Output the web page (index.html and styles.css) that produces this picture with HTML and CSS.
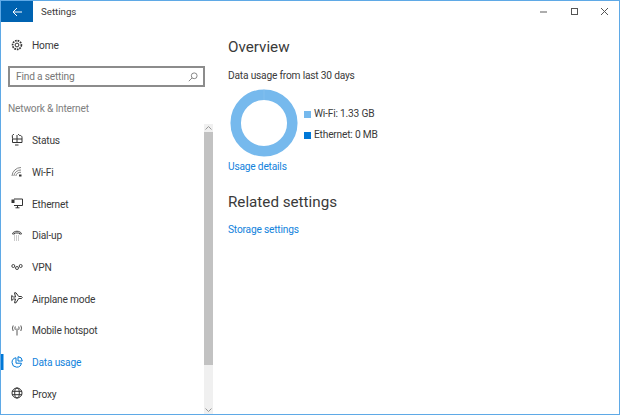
FILE: index.html
```html
<!DOCTYPE html>
<html lang="en">
<head>
    <meta charset="UTF-8">
    <title>Settings</title>
    <link rel="stylesheet" href="styles.css">
</head>
<body>
    <div class="window">
        <header class="titlebar">
            <div class="back-button">
                <svg width="10" height="10" viewBox="0 0 10 10" fill="none" stroke="#fff" stroke-width="1"><path d="M5 1 1 5l4 4M1 5h9"/></svg>
            </div>
            <div class="title">Settings</div>
            <div class="window-controls">
                <svg width="9" height="9" viewBox="0 0 9 9" stroke="#777" stroke-width="1.2" fill="none"><path d="M1 5h7"/></svg>
                <svg width="9" height="9" viewBox="0 0 9 9" stroke="#555" stroke-width="1" fill="none"><rect x="1.5" y="1.5" width="6" height="6"/></svg>
                <svg width="9" height="9" viewBox="0 0 9 9" stroke="#555" stroke-width="1" fill="none"><path d="M1 1l7 7M8 1 1 8"/></svg>
            </div>
        </header>
        <div class="main">
            <aside class="sidebar">
                <div class="home-row">
                    <svg class="icon" viewBox="0 0 12 12" fill="none" stroke="#333" stroke-width="1"><circle cx="6" cy="6" r="1.9"/><circle cx="6" cy="6" r="4.4" stroke-dasharray="1.7 0.9" stroke-width="1.7"/></svg>
                    <span>Home</span>
                </div>
                <div class="search-box">
                    <span>Find a setting</span>
                    <svg width="10" height="10" viewBox="0 0 10 10" fill="none" stroke="#888" stroke-width="1"><circle cx="6.2" cy="3.8" r="2.9"/><path d="M4.1 5.9.8 9.2"/></svg>
                </div>
                <div class="group-title">Network &amp; Internet</div>
                <div class="nav-area">
                    <nav class="nav-list">
                        <div class="nav-item">
                            <svg class="icon" viewBox="0 0 12 12" fill="none" stroke="#333" stroke-width="1"><path d="M1.500 8.500V4.500A3.500 3.500 0 0 1 8.500 1.500 2 2 0 0 1 11 3.500V8.500zM1.500 5h9.500M6 1v7.500M4 11h3.500"/></svg>
                            <span>Status</span>
                        </div>
                        <div class="nav-item">
                            <svg class="icon" viewBox="0 0 12 12" fill="none" stroke="#777" stroke-width="0.9"><path d="M1 10A9 9 0 0 1 10 1.500M2.800 10A7 7 0 0 1 10 4M4.800 10A5 5 0 0 1 10 6.300"/><rect x="8" y="8.500" width="2.500" height="2" fill="#333" stroke="none"/></svg>
                            <span>Wi-Fi</span>
                        </div>
                        <div class="nav-item">
                            <svg class="icon" viewBox="0 0 12 12" fill="none" stroke="#333" stroke-width="1"><path d="M3 2h8.500v6.500H3M6.500 8.500V11M4.500 10.800h4"/><rect x="0.500" y="2.500" width="3" height="3.500" fill="#333" stroke="none"/></svg>
                            <span>Ethernet</span>
                        </div>
                        <div class="nav-item">
                            <svg class="icon" viewBox="0 0 12 12" fill="none" stroke="#444" stroke-width="1"><path d="M1.500 5V4.500C3 1.500 9 1.500 10.500 4.500V5H8.500V4H3.500V5z"/><path d="M3 7h6M3 9h6M3 11h6" stroke="#999" stroke-dasharray="1 1"/></svg>
                            <span>Dial-up</span>
                        </div>
                        <div class="nav-item">
                            <svg class="icon" viewBox="0 0 12 12" fill="none" stroke="#333" stroke-width="0.9"><circle cx="2.300" cy="5" r="1.500"/><circle cx="6" cy="7" r="1.500"/><circle cx="9.700" cy="5" r="1.500"/></svg>
                            <span>VPN</span>
                        </div>
                        <div class="nav-item">
                            <svg class="icon" viewBox="0 0 12 12" fill="none" stroke="#333" stroke-width="1"><path d="M.7 3.500 2.500 5H4.500L3.500.8H5L7.700 4.500H10.500Q12 5.500 10.500 6.500H7.700L5 10.800H3.500L4.500 7H2.500L.7 8.500z"/></svg>
                            <span>Airplane mode</span>
                        </div>
                        <div class="nav-item">
                            <svg class="icon" viewBox="0 0 12 12" fill="none" stroke="#444" stroke-width="0.9"><path d="M6 4.500v7M4.300 2.500Q3.500 4 4.300 5.800M7.700 2.500Q8.500 4 7.700 5.800M2.200 1.500Q.7 4 2.200 7M9.800 1.500Q11.300 4 9.800 7"/></svg>
                            <span>Mobile hotspot</span>
                        </div>
                        <div class="nav-item active">
                            <svg class="icon" viewBox="0 0 12 12" fill="none" stroke="#0078d7" stroke-width="1"><path d="M5 1.800A4.700 4.700 0 1 0 10.400 7.200H5z"/><path d="M7 .7V5h4.300A4.500 4.500 0 0 0 7 .7z"/></svg>
                            <span>Data usage</span>
                        </div>
                        <div class="nav-item">
                            <svg class="icon" viewBox="0 0 12 12" fill="none" stroke="#333" stroke-width="1"><circle cx="6" cy="6" r="5"/><ellipse cx="6" cy="6" rx="2.300" ry="5"/><path d="M1 4.300h10M1 7.700h10"/></svg>
                            <span>Proxy</span>
                        </div>
                    </nav>
                    <div class="scrollbar">
                        <svg class="arrow" width="9" height="8" viewBox="0 0 9 8" fill="none" stroke="#999"><path d="M1.500 5.500 4.500 2.500l3 3"/></svg>
                        <div class="thumb"></div>
                        <svg class="arrow" width="9" height="8" viewBox="0 0 9 8" fill="none" stroke="#999"><path d="M1.500 2.500 4.500 5.500l3-3"/></svg>
                    </div>
                </div>
            </aside>
            <main class="content">
                <h2>Overview</h2>
                <div class="usage-label">Data usage from last 30 days</div>
                <div class="chart-row">
                    <svg width="68" height="68" viewBox="0 0 68 68" fill="none">
                        <circle cx="34" cy="34" r="28.300" stroke="#76b9ed" stroke-width="10.500"/>
                        <path d="M34 .5v10.500" stroke="#8fc5f0" stroke-width="0.600"/>
                    </svg>
                    <div class="legend">
                        <div class="legend-item"><span class="swatch wifi"></span>Wi-Fi: 1.33 GB</div>
                        <div class="legend-item"><span class="swatch ethernet"></span>Ethernet: 0 MB</div>
                    </div>
                </div>
                <a class="link usage-link">Usage details</a>
                <h2 class="related">Related settings</h2>
                <a class="link storage-link">Storage settings</a>
            </main>
        </div>
    </div>
</body>
</html>
```

FILE: styles.css
```css
html, body {
    margin: 0;
    padding: 0;
    height: 100%;
    overflow: hidden;
}
body {
    font-family: 'Roboto', 'Lato', sans-serif;
    font-size: 10.2px;
    letter-spacing: -0.2px;
    color: #3a3a3a;
    background-color: #fff;
}
.window {
    box-sizing: border-box;
    height: 415px;
    border: 1px solid #5fa9e6;
    display: flex;
    flex-direction: column;
}
.titlebar {
    display: flex;
    align-items: center;
    height: 21px;
    flex: none;
}
.back-button {
    width: 32px;
    height: 100%;
    background-color: #0063b1;
    display: flex;
    align-items: center;
    justify-content: center;
}
.title {
    margin-left: 8px;
    font-size: 9.7px;
    letter-spacing: 0;
    flex: 1;
}
.window-controls {
    display: flex;
    gap: 21.5px;
    margin-right: 10px;
    align-items: center;
}
.window-controls svg {
    flex: none;
}
.main {
    flex: 1;
    display: flex;
    min-height: 0;
}
.sidebar {
    width: 212px;
    flex: none;
    display: flex;
    flex-direction: column;
}
.icon {
    width: 12px;
    height: 12px;
    flex: none;
}
.home-row {
    display: flex;
    align-items: center;
    gap: 9px;
    padding-left: 10px;
    height: 16px;
    margin-top: 15px;
}
.search-box {
    box-sizing: border-box;
    margin: 13px 8px 0 7px;
    height: 21px;
    border: 2px solid #8c8c8c;
    padding: 0 5px 0 6px;
    display: flex;
    align-items: center;
    justify-content: space-between;
    color: #777;
}
.group-title {
    margin: 13px 0 0 7px;
    height: 17px;
    line-height: 17px;
    color: #808080;
}
.nav-area {
    flex: 1;
    display: flex;
    min-height: 0;
    margin-top: 7px;
}
.nav-list {
    flex: 1;
}
.nav-item {
    display: flex;
    align-items: center;
    gap: 9px;
    height: 31.7px;
    padding-left: 10px;
}
.nav-item span {
    padding-top: 2px;
}
.nav-item.active {
    color: #1282dc;
    background: linear-gradient(#0078d7, #0078d7) no-repeat 0 center / 2.5px 16px;
}
.scrollbar {
    width: 9px;
    background-color: #f0f0f0;
    display: flex;
    flex-direction: column;
}
.scrollbar .arrow {
    flex: none;
}
.thumb {
    flex: 1;
    margin-bottom: 41px;
    background-color: #c2c2c2;
}
.content {
    flex: 1;
    padding: 14px 0 0 15px;
}
h2 {
    margin: 0;
    font-size: 15.200px;
    font-weight: 400;
    letter-spacing: 0;
    line-height: 22px;
    color: #3a3a3a;
}
.usage-label {
    margin-top: 10px;
    line-height: 16px;
}
.chart-row {
    display: flex;
    align-items: center;
    gap: 6px;
    margin: 4.500px 0 0 2px;
}
.legend {
    display: flex;
    flex-direction: column;
    gap: 5px;
    margin-top: 4px;
}
.legend-item {
    display: flex;
    align-items: center;
    gap: 3px;
    line-height: 16px;
}
.swatch {
    width: 7px;
    height: 7px;
}
.swatch.wifi {
    background-color: #76b9ed;
}
.swatch.ethernet {
    background-color: #0078d7;
}
.link {
    display: block;
    color: #1282dc;
    line-height: 16px;
}
.usage-link {
    margin-top: 2.500px;
}
.related {
    margin-top: 15.500px;
}
.storage-link {
    margin-top: 9.500px;
}
```
